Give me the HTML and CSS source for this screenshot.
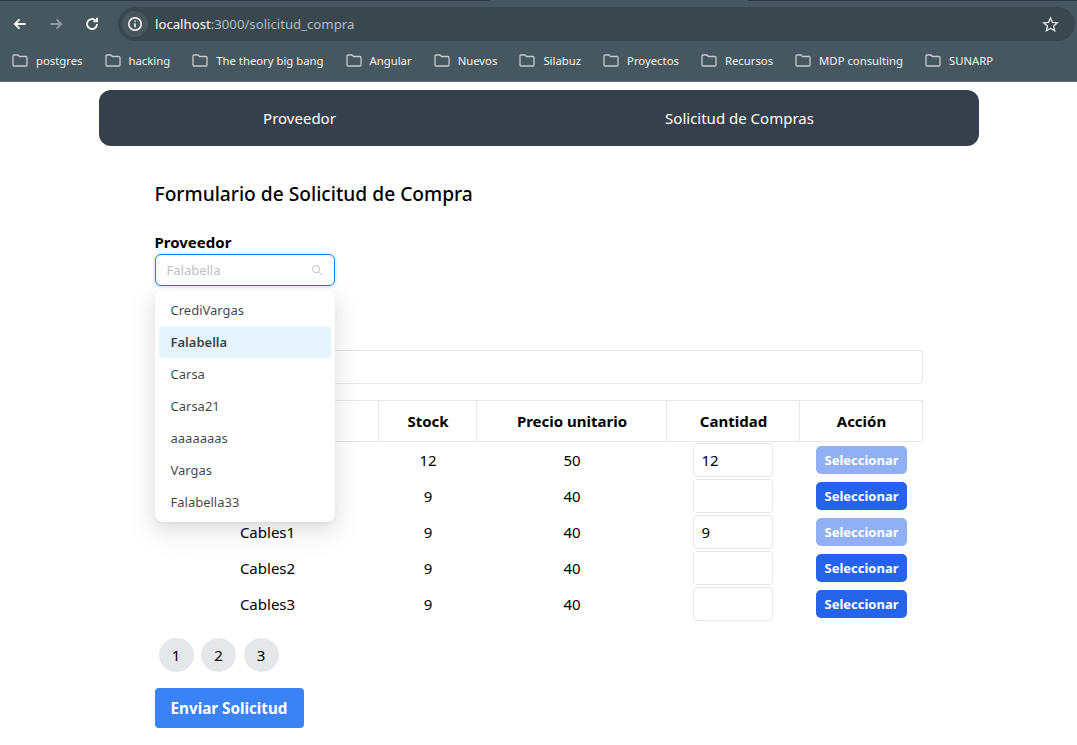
FILE: index.html
```html
<!DOCTYPE html>
<html lang="en">
<head>
    <meta charset="UTF-8">
    <meta name="viewport" content="width=device-width, initial-scale=1.0">
    <title>Solicitud de Compra</title>
    <link rel="stylesheet" href="styles.css">
</head>
<body>
    <!-- BROWSER BAR -->
    <header class="browser">
        <div class="toolbar">
            <svg class="tool" viewBox="0 0 16 16"><path d="M13.500 8H3M7.500 3.300 2.800 8l4.700 4.700"/></svg>
            <svg class="tool off" viewBox="0 0 16 16"><path d="M2.500 8H13M8.500 3.300 13.200 8l-4.700 4.700"/></svg>
            <svg class="tool" viewBox="0 0 16 16"><path d="M13 8a5 5 0 1 1-1.600-3.700M13 1.800v3.600H9.400"/></svg>
            <div class="address">
                <span class="info"><svg viewBox="0 0 16 16"><circle cx="8" cy="8" r="6.200"/><path d="M8 7.200v4M8 4.400v1.400"/></svg></span>
                <span class="url"><span class="host">localhost</span>:3000/solicitud_compra</span>
                <svg class="star" viewBox="0 0 16 16"><path d="M8 1.800 9.800 6l4.600.4-3.500 3 1 4.500L8 11.500l-3.900 2.400 1-4.500-3.500-3L6.200 6z"/></svg>
            </div>
        </div>
        <ul class="bookmarks">
            <li><svg viewBox="0 0 16 14"><path d="M1 3a1 1 0 0 1 1-1h4l1.500 1.500H14a1 1 0 0 1 1 1V12a1 1 0 0 1-1 1H2a1 1 0 0 1-1-1z"/></svg>postgres</li>
            <li><svg viewBox="0 0 16 14"><path d="M1 3a1 1 0 0 1 1-1h4l1.500 1.500H14a1 1 0 0 1 1 1V12a1 1 0 0 1-1 1H2a1 1 0 0 1-1-1z"/></svg>hacking</li>
            <li><svg viewBox="0 0 16 14"><path d="M1 3a1 1 0 0 1 1-1h4l1.500 1.500H14a1 1 0 0 1 1 1V12a1 1 0 0 1-1 1H2a1 1 0 0 1-1-1z"/></svg>The theory big bang</li>
            <li><svg viewBox="0 0 16 14"><path d="M1 3a1 1 0 0 1 1-1h4l1.500 1.500H14a1 1 0 0 1 1 1V12a1 1 0 0 1-1 1H2a1 1 0 0 1-1-1z"/></svg>Angular</li>
            <li><svg viewBox="0 0 16 14"><path d="M1 3a1 1 0 0 1 1-1h4l1.500 1.500H14a1 1 0 0 1 1 1V12a1 1 0 0 1-1 1H2a1 1 0 0 1-1-1z"/></svg>Nuevos</li>
            <li><svg viewBox="0 0 16 14"><path d="M1 3a1 1 0 0 1 1-1h4l1.500 1.500H14a1 1 0 0 1 1 1V12a1 1 0 0 1-1 1H2a1 1 0 0 1-1-1z"/></svg>Silabuz</li>
            <li><svg viewBox="0 0 16 14"><path d="M1 3a1 1 0 0 1 1-1h4l1.500 1.500H14a1 1 0 0 1 1 1V12a1 1 0 0 1-1 1H2a1 1 0 0 1-1-1z"/></svg>Proyectos</li>
            <li><svg viewBox="0 0 16 14"><path d="M1 3a1 1 0 0 1 1-1h4l1.500 1.500H14a1 1 0 0 1 1 1V12a1 1 0 0 1-1 1H2a1 1 0 0 1-1-1z"/></svg>Recursos</li>
            <li><svg viewBox="0 0 16 14"><path d="M1 3a1 1 0 0 1 1-1h4l1.500 1.500H14a1 1 0 0 1 1 1V12a1 1 0 0 1-1 1H2a1 1 0 0 1-1-1z"/></svg>MDP consulting</li>
            <li><svg viewBox="0 0 16 14"><path d="M1 3a1 1 0 0 1 1-1h4l1.500 1.500H14a1 1 0 0 1 1 1V12a1 1 0 0 1-1 1H2a1 1 0 0 1-1-1z"/></svg>SUNARP</li>
        </ul>
    </header>

    <!-- NAVIGATION -->
    <nav class="nav">
        <a href="#">Proveedor</a>
        <a href="#">Solicitud de Compras</a>
    </nav>

    <!-- FORM -->
    <main class="form">
        <h1>Formulario de Solicitud de Compra</h1>
        <label class="label">Proveedor</label>
        <div class="select-wrap">
            <div class="select">
                <span>Falabella</span>
                <svg viewBox="0 0 16 16"><circle cx="6.800" cy="6.800" r="4.800"/><path d="m10.400 10.400 4 4"/></svg>
            </div>
            <ul class="dropdown">
                <li>CrediVargas</li>
                <li class="active">Falabella</li>
                <li>Carsa</li>
                <li>Carsa21</li>
                <li>aaaaaaas</li>
                <li>Vargas</li>
                <li>Falabella33</li>
            </ul>
        </div>
        <input class="search" type="text">
        <table class="products">
            <thead>
                <tr><th class="c-name">Producto</th><th class="c-stock">Stock</th><th class="c-price">Precio unitario</th><th class="c-qty">Cantidad</th><th class="c-act">Acción</th></tr>
            </thead>
            <tbody>
                <tr><td>Cables</td><td>12</td><td>50</td><td class="qty-cell"><input class="qty" type="text" value="12"></td><td><button class="pick" disabled>Seleccionar</button></td></tr>
                <tr><td>Cables0</td><td>9</td><td>40</td><td class="qty-cell"><input class="qty" type="text"></td><td><button class="pick">Seleccionar</button></td></tr>
                <tr><td>Cables1</td><td>9</td><td>40</td><td class="qty-cell"><input class="qty" type="text" value="9"></td><td><button class="pick" disabled>Seleccionar</button></td></tr>
                <tr><td>Cables2</td><td>9</td><td>40</td><td class="qty-cell"><input class="qty" type="text"></td><td><button class="pick">Seleccionar</button></td></tr>
                <tr><td>Cables3</td><td>9</td><td>40</td><td class="qty-cell"><input class="qty" type="text"></td><td><button class="pick">Seleccionar</button></td></tr>
            </tbody>
        </table>
        <div class="pages">
            <button>1</button>
            <button>2</button>
            <button>3</button>
        </div>
        <button class="send">Enviar Solicitud</button>
    </main>
</body>
</html>
```

FILE: styles.css
```css
/*PAGE*/
body{
    margin: 0;
    background-color: #fff;
    color: #000;
    font-family: "Noto Sans", sans-serif;
    font-size: 15px;
}
ul{
    list-style-type: none;
    margin: 0;
    padding: 0;
}
/*BROWSER BAR*/
.browser{
    height: 82px;
    box-sizing: border-box;
    padding-top: 7px;
    background-color: #47575f;
    background-image: linear-gradient(to right, #2f3a40 490px, transparent 490px, transparent 748px, #2f3a40 748px);
    background-size: 100% 1px;
    background-repeat: no-repeat;
    border-bottom: 1px solid #5b6a72;
}
.toolbar{
    display: flex;
    align-items: center;
    height: 34px;
    padding-left: 12px;
}
.tool{
    width: 16px;
    height: 16px;
    margin-right: 20px;
    fill: none;
    stroke: #fff;
    stroke-width: 1.8;
}
.tool.off{
    stroke: #8f9ca3;
}
.address{
    display: flex;
    align-items: center;
    flex: 1;
    height: 34px;
    margin: 0 2px 0 -2px;
    border-radius: 17px;
    background-color: #3a474e;
    font-size: 13.2px;
    color: #b4bcc0;
}
.info{
    display: flex;
    align-items: center;
    justify-content: center;
    width: 26px;
    height: 26px;
    margin: 0 7px 0 4px;
    border-radius: 50%;
    background-color: #47555c;
}
.info svg{
    width: 16px;
    height: 16px;
    fill: none;
    stroke: #fff;
    stroke-width: 1.5;
}
.host{
    color: #fff;
}
.star{
    width: 17px;
    height: 17px;
    margin-left: auto;
    margin-right: 16px;
    fill: none;
    stroke: #dfe3e5;
    stroke-width: 1.3;
}
.bookmarks{
    display: flex;
    align-items: center;
    height: 38px;
    padding-left: 12px;
    gap: 22px;
    font-size: 11.32px;
    color: #f1f3f4;
}
.bookmarks li{
    display: flex;
    align-items: center;
    gap: 8px;
}
.bookmarks svg{
    width: 16px;
    height: 14px;
    fill: none;
    stroke: #c4cacd;
    stroke-width: 1.3;
}
/*NAVIGATION*/
.nav{
    display: grid;
    grid-template-columns: 402px 402px;
    column-gap: 38px;
    align-items: center;
    width: 880px;
    height: 56px;
    margin: 8px auto 0;
    border-radius: 12px;
    background-color: #36404d;
}
.nav a{
    color: #fff;
    font-size: 15px;
    text-align: center;
    text-decoration: none;
}
/*FORM*/
.form{
    width: 768px;
    margin: 0 auto;
}
h1{
    margin: 34px 0 0;
    height: 27px;
    font-size: 19.2px;
    line-height: 27px;
    font-weight: 500;
}
.label{
    display: block;
    margin-top: 25px;
    height: 20px;
    line-height: 20px;
    font-size: 15px;
    font-weight: 700;
}
.select-wrap{
    position: relative;
    width: 180px;
    height: 32px;
    margin-top: 2px;
}
.select{
    display: flex;
    align-items: center;
    justify-content: space-between;
    box-sizing: border-box;
    height: 32px;
    padding: 0 11px;
    border: 1px solid #1677ff;
    border-radius: 6px;
    outline: 2px solid rgba(5, 145, 255, 0.1);
    font-size: 13px;
    color: #bfbfbf;
}
.select svg{
    width: 12px;
    height: 12px;
    fill: none;
    stroke: #bfbfbf;
    stroke-width: 1.3;
}
.dropdown{
    position: absolute;
    top: 36px;
    left: 0;
    z-index: 5;
    width: 172px;
    padding: 4px;
    border-radius: 8px;
    background-color: #fff;
    box-shadow: 0 6px 16px rgba(0, 0, 0, 0.08), 0 3px 6px -4px rgba(0, 0, 0, 0.12), 0 9px 28px 8px rgba(0, 0, 0, 0.05);
    font-size: 13px;
    color: rgba(0, 0, 0, 0.75);
}
.dropdown li{
    height: 32px;
    padding: 0 12px;
    line-height: 32px;
    border-radius: 4px;
}
.dropdown .active{
    background-color: #e6f4ff;
    font-weight: 600;
}
.search{
    display: block;
    box-sizing: border-box;
    width: 100%;
    height: 34px;
    margin-top: 64px;
    border: 1px solid #e5e7eb;
    border-radius: 4px;
}
/*TABLE*/
.products{
    width: 768px;
    margin-top: 16px;
    border-collapse: collapse;
    table-layout: fixed;
    text-align: center;
}
.products th{
    box-sizing: border-box;
    height: 41px;
    padding: 0 0 0 2px;
    border: 1px solid #e5e7eb;
    font-size: 15px;
    font-weight: 700;
}
.c-name{width: 223px;}
.c-stock{width: 98px;}
.c-price{width: 190px;}
.c-qty{width: 133px;}
.products td{
    height: 36px;
    padding: 0 0 0 2px;
}
.products .qty-cell{
    padding: 0;
}
.qty{
    display: block;
    box-sizing: border-box;
    width: 80px;
    height: 34px;
    margin: 0 auto;
    padding: 0 8px;
    border: 1px solid #e5e7eb;
    border-radius: 4px;
    font-family: inherit;
    font-size: 15px;
    color: #000;
}
.pick{
    display: block;
    width: 91px;
    height: 28px;
    margin: 0 auto;
    padding: 0;
    border: none;
    border-radius: 5px;
    background-color: #2563eb;
    color: #fff;
    font-family: inherit;
    font-size: 13px;
    font-weight: 700;
    cursor: pointer;
}
.pick:disabled{
    opacity: 0.5;
}
/*PAGINATION*/
.pages{
    display: flex;
    gap: 7.5px;
    margin: 16px 0 0 4px;
}
.pages button{
    width: 35px;
    height: 34px;
    padding: 0;
    border: none;
    border-radius: 50%;
    background-color: #e5e7eb;
    color: #000;
    font-family: inherit;
    font-size: 15px;
}
.send{
    display: block;
    width: 149px;
    height: 40px;
    margin-top: 16px;
    padding: 0;
    border: none;
    border-radius: 4px;
    background-color: #3b82f6;
    color: #fff;
    font-family: inherit;
    font-size: 15.2px;
    font-weight: 700;
    cursor: pointer;
}
```
